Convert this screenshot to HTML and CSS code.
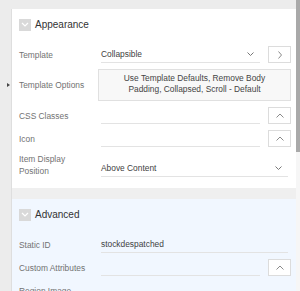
FILE: index.html
```html
<!DOCTYPE html>
<html>
<head>
    <title>Region Properties</title>
    <meta name="viewport" content="width=device-width, initial-scale=1.0">
    <link rel="stylesheet" href="styles.css">
</head>
<body>
    <div class="frame">
        <div class="main">
            <div class="panel">
                <div class="section">
                    <div class="section-header">
                        <span class="toggle"><svg width="8" height="5" viewBox="0 0 8 5"><path d="M1 1l3 3 3-3" fill="none" stroke="#fff" stroke-width="1.2"/></svg></span>
                        <span class="section-title">Appearance</span>
                    </div>

                    <div class="row">
                        <div class="label">Template</div>
                        <div class="field">Collapsible<span class="caret"><svg width="7" height="4" viewBox="0 0 7 4"><path d="M0.5 0.5l3 3 3-3" fill="none" stroke="#777" stroke-width="1"/></svg></span></div>
                        <div class="btn"><svg width="4" height="8" viewBox="0 0 4 8"><path d="M0.5 0.5l3 3.5-3 3.5" fill="none" stroke="#8a8a8a" stroke-width="1"/></svg></div>
                    </div>

                    <div class="row">
                        <span class="marker"></span>
                        <div class="label">Template Options</div>
                        <div class="options">Use Template Defaults, Remove Body Padding, Collapsed, Scroll - Default</div>
                    </div>

                    <div class="row">
                        <div class="label">CSS Classes</div>
                        <div class="field"></div>
                        <div class="btn"><svg width="8" height="5" viewBox="0 0 8 5"><path d="M0.5 4.5l3.5-3.5 3.5 3.5" fill="none" stroke="#8a8a8a" stroke-width="1"/></svg></div>
                    </div>

                    <div class="row">
                        <div class="label">Icon</div>
                        <div class="field"></div>
                        <div class="btn"><svg width="8" height="5" viewBox="0 0 8 5"><path d="M0.5 4.5l3.5-3.5 3.5 3.5" fill="none" stroke="#8a8a8a" stroke-width="1"/></svg></div>
                    </div>

                    <div class="row tall">
                        <div class="label">Item Display<br>Position</div>
                        <div class="field wide">Above Content<span class="caret"><svg width="7" height="4" viewBox="0 0 7 4"><path d="M0.5 0.5l3 3 3-3" fill="none" stroke="#777" stroke-width="1"/></svg></span></div>
                    </div>
                </div>

                <div class="divider"></div>

                <div class="section advanced">
                    <div class="section-header">
                        <span class="toggle"><svg width="8" height="5" viewBox="0 0 8 5"><path d="M1 1l3 3 3-3" fill="none" stroke="#fff" stroke-width="1.2"/></svg></span>
                        <span class="section-title">Advanced</span>
                    </div>

                    <div class="row">
                        <div class="label">Static ID</div>
                        <div class="field wide">stockdespatched</div>
                    </div>

                    <div class="row">
                        <div class="label">Custom Attributes</div>
                        <div class="field"></div>
                        <div class="btn"><svg width="8" height="5" viewBox="0 0 8 5"><path d="M0.5 4.5l3.5-3.5 3.5 3.5" fill="none" stroke="#8a8a8a" stroke-width="1"/></svg></div>
                    </div>

                    <div class="row">
                        <div class="label">Region Image</div>
                        <div class="field"></div>
                    </div>
                </div>
            </div>
        </div>
        <div class="scrollbar">
            <div class="thumb"></div>
        </div>
    </div>
</body>
</html>
```

FILE: styles.css
```css
body {
    font-family: "Liberation Sans", Arial, sans-serif;
    margin: 0;
    background-color: #ececec;
    overflow: hidden;
}

.frame {
    display: flex;
    height: 291px;
}

.main {
    width: 296px;
    padding: 9px 0 0 11px;
    box-sizing: border-box;
    background-color: #ececec;
}

.panel {
    border-left: 1px solid #dedede;
    height: 100%;
}

.section {
    background-color: #ffffff;
    padding: 0 5px 11px 7px;
    display: flex;
    flex-direction: column;
    gap: 6px;
}

.section.advanced {
    background-color: #f1f7ff;
    height: 100%;
}

.section-header {
    display: flex;
    align-items: center;
    height: 31px;
}

.toggle {
    width: 12px;
    height: 12px;
    background-color: #d9d9d9;
    display: flex;
    align-items: center;
    justify-content: center;
    margin-right: 4px;
}

.section-title {
    font-size: 10px;
    color: #333;
}

.divider {
    height: 11px;
    background-color: #efefef;
}

.row {
    position: relative;
    display: flex;
    align-items: center;
    min-height: 17px;
}

.row.tall {
    min-height: 23px;
}

.label {
    width: 82px;
    flex-shrink: 0;
    font-size: 8.4px;
    line-height: 12px;
    color: #727272;
}

.field {
    width: 159px;
    height: 17px;
    box-sizing: border-box;
    border-bottom: 1px solid #e3e3e3;
    font-size: 8.4px;
    color: #3f3f3f;
    display: flex;
    align-items: flex-end;
    padding-bottom: 3px;
    position: relative;
    align-self: flex-end;
}

.field.wide {
    width: 187px;
}

.caret {
    position: absolute;
    right: 6px;
    bottom: 6px;
    line-height: 0;
}

.btn {
    width: 23px;
    height: 17px;
    box-sizing: border-box;
    border: 1px solid #dcdcdc;
    background-color: #fff;
    margin-left: 8px;
    display: flex;
    align-items: center;
    justify-content: center;
}

.options {
    margin-left: -3px;
    width: 193px;
    box-sizing: border-box;
    border: 1px solid #e0e0e0;
    background-color: #f8f8f8;
    font-size: 8.4px;
    line-height: 11px;
    color: #444;
    text-align: center;
    padding: 3px 22px 5px;
}

.marker {
    position: absolute;
    left: -12px;
    top: 50%;
    margin-top: -2px;
    border-left: 3px solid #444;
    border-top: 2.5px solid transparent;
    border-bottom: 2.5px solid transparent;
}

.scrollbar {
    width: 4px;
    background-color: #f6f6f6;
}

.thumb {
    height: 152px;
    background-color: #a9a9a9;
}
```
